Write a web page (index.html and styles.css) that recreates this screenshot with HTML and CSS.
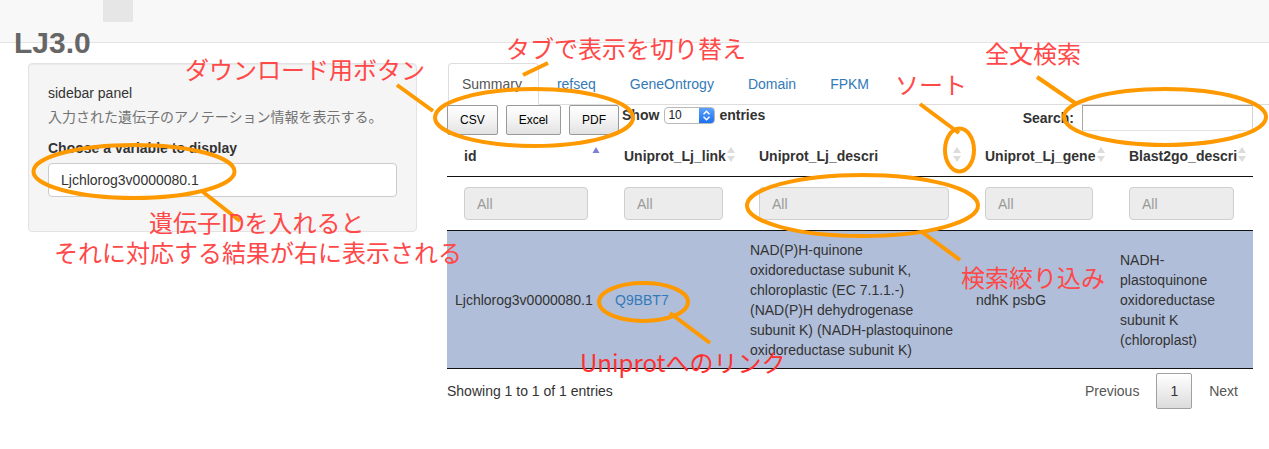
FILE: index.html
```html
<!DOCTYPE html>
<html lang="ja">
<head>
<meta charset="utf-8">
<title>LJ3.0</title>
<link rel="stylesheet" href="styles.css">
</head>
<body>
<div class="topbar"><div class="topbar-tab"></div></div>
<h2 class="title">LJ3.0</h2>
<div class="layout">
  <aside class="sidebar">
    <p class="sb-title">sidebar panel</p>
    <p class="help">入力された遺伝子のアノテーション情報を表示する。</p>
    <label class="sb-label">Choose a variable to display</label>
    <div class="text-input">Ljchlorog3v0000080.1</div>
  </aside>
  <main class="main">
    <ul class="tabs">
      <li class="tab active">Summary</li>
      <li class="tab">refseq</li>
      <li class="tab">GeneOntrogy</li>
      <li class="tab">Domain</li>
      <li class="tab">FPKM</li>
    </ul>
    <div class="dt-wrap">
      <div class="dt-controls">
        <div class="dt-buttons">
          <button class="dt-btn">CSV</button>
          <button class="dt-btn">Excel</button>
          <button class="dt-btn">PDF</button>
        </div>
        <div class="dt-length">
          <span>Show</span>
          <span class="select"><span class="select-val">10</span><span class="select-arrow"><svg width="15" height="17" viewBox="0 0 15 17"><path d="M4.5 7.2 L7.5 4.2 L10.5 7.2 M4.5 9.8 L7.5 12.8 L10.5 9.8" fill="none" stroke="#fff" stroke-width="1.5"/></svg></span></span>
          <span>entries</span>
        </div>
        <div class="dt-filter">
          <span>Search:</span>
          <span class="search-box"></span>
        </div>
      </div>
      <table class="dt">
        <colgroup>
          <col class="c1"><col class="c2"><col class="c3"><col class="c4"><col class="c5">
        </colgroup>
        <thead>
          <tr>
            <th><div class="th-inner"><span>id</span><svg class="sort" width="8" height="15" viewBox="0 0 8 15"><polygon points="0.5,6 4,0 7.5,6" fill="#7c80d8"/></svg></div></th>
            <th><div class="th-inner"><span>Uniprot_Lj_link</span><svg class="sort" width="8" height="15" viewBox="0 0 8 15"><polygon points="0,6 4,0 8,6" fill="#dcdcdc"/><polygon points="0,9 8,9 4,15" fill="#dcdcdc"/></svg></div></th>
            <th><div class="th-inner"><span>Uniprot_Lj_descri</span><svg class="sort" width="8" height="15" viewBox="0 0 8 15"><polygon points="0,6 4,0 8,6" fill="#dcdcdc"/><polygon points="0,9 8,9 4,15" fill="#dcdcdc"/></svg></div></th>
            <th><div class="th-inner"><span>Uniprot_Lj_gene</span><svg class="sort" width="8" height="15" viewBox="0 0 8 15"><polygon points="0,6 4,0 8,6" fill="#dcdcdc"/><polygon points="0,9 8,9 4,15" fill="#dcdcdc"/></svg></div></th>
            <th><div class="th-inner"><span>Blast2go_descri</span><svg class="sort" width="8" height="15" viewBox="0 0 8 15"><polygon points="0,6 4,0 8,6" fill="#dcdcdc"/><polygon points="0,9 8,9 4,15" fill="#dcdcdc"/></svg></div></th>
          </tr>
          <tr class="filters">
            <td><div class="filter-input">All</div></td>
            <td><div class="filter-input">All</div></td>
            <td><div class="filter-input">All</div></td>
            <td><div class="filter-input">All</div></td>
            <td><div class="filter-input">All</div></td>
          </tr>
        </thead>
        <tbody>
          <tr class="selected">
            <td>Ljchlorog3v0000080.1</td>
            <td><a class="link">Q9BBT7</a></td>
            <td>NAD(P)H-quinone oxidoreductase subunit K, chloroplastic (EC 7.1.1.-) (NAD(P)H dehydrogenase subunit K) (NADH-plastoquinone oxidoreductase subunit K)</td>
            <td>ndhK psbG</td>
            <td>NADH-plastoquinone oxidoreductase subunit K (chloroplast)</td>
          </tr>
        </tbody>
      </table>
      <div class="dt-footer">
        <div class="dt-info">Showing 1 to 1 of 1 entries</div>
        <div class="pager">
          <span class="page">Previous</span>
          <span class="page current">1</span>
          <span class="page">Next</span>
        </div>
      </div>
    </div>
  </main>
</div>

<div class="annotations">
  <svg class="marks" width="1269" height="449" viewBox="0 0 1269 449">
    <g fill="none" stroke="#ff9900" stroke-width="4">
      <ellipse cx="134" cy="171.5" rx="100.5" ry="26.5"/>
      <ellipse cx="534" cy="117.5" rx="99" ry="28.5"/>
      <ellipse cx="1165" cy="117" rx="101" ry="28"/>
      <ellipse cx="959.5" cy="150" rx="14.5" ry="21.5"/>
      <ellipse cx="862.5" cy="205.5" rx="115.5" ry="30.5"/>
      <ellipse cx="643.5" cy="302" rx="44.5" ry="19"/>
      <line x1="203" y1="192" x2="240" y2="221"/>
      <line x1="397" y1="85" x2="433" y2="111"/>
      <line x1="523" y1="75" x2="548" y2="63"/>
      <line x1="1037" y1="77" x2="1075" y2="103"/>
      <line x1="920" y1="104" x2="959" y2="133"/>
      <line x1="922" y1="232" x2="960" y2="260"/>
      <line x1="670" y1="313" x2="710" y2="343"/>
    </g>
  </svg>
  <div class="note n-download">ダウンロード用ボタン</div>
  <div class="note n-tab">タブで表示を切り替え</div>
  <div class="note n-search">全文検索</div>
  <div class="note n-sort">ソート</div>
  <div class="note n-id"><span class="n-id-first">遺伝子IDを入れると</span><br>それに対応する結果が右に表示される</div>
  <div class="note n-filter">検索絞り込み</div>
  <div class="note n-link">Uniprotへのリンク</div>
</div>
</body>
</html>
```
FILE: styles.css
```css
html, body {
  margin: 0;
  padding: 0;
}
body {
  position: relative;
  width: 1269px;
  height: 449px;
  overflow: hidden;
  font-family: "Liberation Sans", "Noto Sans CJK JP", sans-serif;
  font-size: 14px;
  line-height: 20px;
  color: #333;
  background: #fff;
}

/* top bar */
.topbar {
  height: 43px;
  box-sizing: border-box;
  background: #f8f8f8;
  border-bottom: 1px solid #e4e4e4;
}
.topbar-tab {
  margin-left: 103px;
  width: 30px;
  height: 22px;
  background: #e6e6e6;
}
.title {
  position: relative;
  margin: -15px 0 0 14px;
  font-size: 30px;
  line-height: 30px;
  font-weight: bold;
  color: #666;
}

/* layout */
.layout {
  display: flex;
  align-items: flex-start;
  margin-top: 5px;
  padding-left: 28px;
}
.sidebar {
  width: 389px;
  box-sizing: border-box;
  padding: 19px;
  background: #f5f5f5;
  border: 1px solid #e3e3e3;
  border-radius: 4px;
  box-shadow: inset 0 1px 1px rgba(0, 0, 0, .05);
}
.sb-title {
  margin: 0;
}
.help {
  margin: 4px 0 0;
  color: #737373;
}
.sb-label {
  display: block;
  margin: 11px 0 5px;
  font-weight: bold;
}
.text-input {
  height: 34px;
  box-sizing: border-box;
  margin-bottom: 15px;
  padding: 6px 12px;
  background: #fff;
  border: 1px solid #ccc;
  border-radius: 4px;
}

.main {
  flex: 1;
  margin-left: 30px;
}

/* tabs */
.tabs {
  display: flex;
  list-style: none;
  margin: 0;
  padding: 0 0 0 1px;
  border-bottom: 1px solid #ddd;
}
.tab {
  padding: 10px 15px;
  margin-right: 2px;
  margin-bottom: -1px;
  border: 1px solid transparent;
  border-radius: 4px 4px 0 0;
  color: #337ab7;
}
.tab.active {
  padding: 10px 16px 10px 13px;
  color: #555;
  background: #fff;
  border-color: #ddd #ddd transparent;
}

/* datatable */
.dt-wrap {
  width: 806px;
}
.dt-controls {
  display: flex;
  align-items: flex-start;
  height: 31px;
}
.dt-buttons {
  display: flex;
}
.dt-btn {
  height: 30px;
  margin: 0 8px 0 0;
  padding: 0 12px;
  font-family: "Liberation Sans", sans-serif;
  font-size: 12px;
  color: #000;
  border: 1px solid #999;
  border-radius: 2px;
  background: linear-gradient(to bottom, #ffffff 0%, #f3f3f3 50%, #e2e2e2 100%);
}
.dt-btn:last-child {
  margin-right: 3px;
}
.dt-length {
  display: flex;
  align-items: center;
  height: 20px;
  font-weight: bold;
}
.select {
  display: flex;
  width: 51px;
  height: 17px;
  box-sizing: border-box;
  margin: 0 4px 0 5px;
  border: 1px solid #b9b9b9;
  border-radius: 4px;
  background: #fff;
  overflow: hidden;
}
.select-val {
  flex: 1;
  padding-left: 3px;
  font-size: 12px;
  line-height: 15px;
  font-weight: normal;
  color: #222;
}
.select-arrow {
  display: flex;
  width: 15px;
  height: 15px;
  background: linear-gradient(to bottom, #5aa2fb, #1e6ff2);
}
.select-arrow svg {
  display: block;
  margin-top: -1px;
}
.dt-filter {
  display: flex;
  align-items: center;
  margin-left: auto;
  font-weight: bold;
}
.search-box {
  width: 171px;
  height: 26px;
  box-sizing: border-box;
  margin-left: 8px;
  background: #fff;
  border: 1px solid;
  border-color: #999 #d4d4d4 #e2e2e2 #a8a8a8;
}

table.dt {
  width: 806px;
  table-layout: fixed;
  border-collapse: collapse;
  border-spacing: 0;
}
.c1 { width: 160px; }
.c2 { width: 135px; }
.c3 { width: 226px; }
.c4 { width: 144px; }
.c5 { width: 141px; }

.dt th {
  padding: 10px 7px 10px 17px;
  text-align: left;
  font-weight: bold;
  border-bottom: 1px solid #111;
}
.th-inner {
  display: flex;
  justify-content: space-between;
  align-items: center;
  white-space: nowrap;
}
.sort {
  display: block;
  flex: none;
  margin-top: -3px;
}
.filters td {
  padding: 10px 19px 10px 17px;
  border-bottom: 1px solid #111;
}
.filter-input {
  height: 33px;
  box-sizing: border-box;
  padding: 6px 12px;
  color: #9a9a9a;
  background: #ececec;
  border: 1px solid #cfcfcf;
  border-radius: 4px;
}
.dt tbody td {
  padding: 9px 10px 8px 8px;
  vertical-align: middle;
  border-bottom: 1px solid #111;
}
.dt tr.selected td {
  background: #b0bed9;
}
.link {
  color: #337ab7;
  text-decoration: none;
}

.dt-footer {
  display: flex;
  justify-content: space-between;
  align-items: center;
  margin-top: 4px;
}
.pager {
  display: flex;
}
.page {
  padding: 7px 14px;
  margin-left: 2px;
  border: 1px solid transparent;
  border-radius: 2px;
  color: #555;
}
.page.current {
  padding: 7px 13px;
  color: #333;
  border-color: #a0a0a0;
  background: linear-gradient(to bottom, #ffffff 0%, #dcdcdc 100%);
}

/* annotation overlay */
.annotations {
  position: absolute;
  left: 0;
  top: 0;
  width: 1269px;
  height: 449px;
  pointer-events: none;
}
.marks {
  position: absolute;
  left: 0;
  top: 0;
}
.note {
  position: absolute;
  font-family: "Noto Sans CJK JP", sans-serif;
  font-size: 24px;
  line-height: 24px;
  color: #ff4848;
  white-space: nowrap;
}
.n-download { left: 185px; top: 57px; }
.n-tab { left: 506px; top: 36px; }
.n-search { left: 985px; top: 41px; }
.n-sort { left: 895px; top: 72px; }
.n-id { left: 54px; top: 207px; line-height: 30px; }
.n-id-first { margin-left: 95px; }
.n-filter { left: 961px; top: 265px; }
.n-link { left: 580px; top: 350px; color: #ff3030; }
```
